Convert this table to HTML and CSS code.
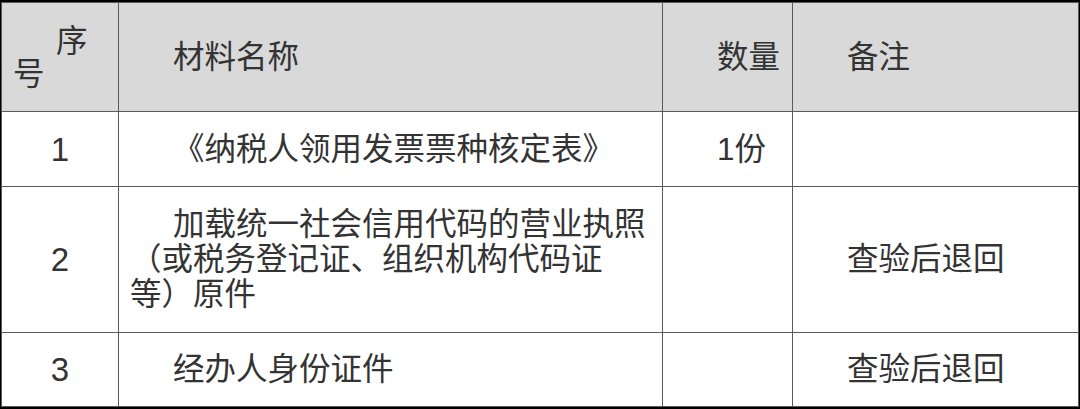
FILE: index.html
```html
<!DOCTYPE html>
<html lang="zh-CN">
<head>
<meta charset="utf-8">
<title>材料清单</title>
<link rel="stylesheet" href="styles.css">
</head>
<body>
<div class="frame">
<table class="materials">
  <colgroup>
    <col class="c-no">
    <col class="c-name">
    <col class="c-qty">
    <col class="c-note">
  </colgroup>
  <thead>
    <tr class="r-head">
      <th>序<br>号</th>
      <th>材料名称</th>
      <th>数量</th>
      <th>备注</th>
    </tr>
  </thead>
  <tbody>
    <tr class="r-1">
      <td class="num">1</td>
      <td>《纳税人领用发票票种核定表》</td>
      <td>1份</td>
      <td></td>
    </tr>
    <tr class="r-2">
      <td class="num">2</td>
      <td>加载统一社会信用代码的营业执照<br>（或税务登记证、组织机构代码证<br>等）原件</td>
      <td></td>
      <td>查验后退回</td>
    </tr>
    <tr class="r-3">
      <td class="num">3</td>
      <td>经办人身份证件</td>
      <td></td>
      <td>查验后退回</td>
    </tr>
  </tbody>
</table>
</div>
</body>
</html>
```
FILE: styles.css
```css
html, body {
  margin: 0;
  padding: 0;
  background: #000;
  height: 409px;
  overflow: hidden;
}
.frame {
  padding: 2px 2px 2px 1px;
}
.materials {
  width: 1077px;
  table-layout: fixed;
  border-collapse: collapse;
  background: #fff;
  font-family: "Liberation Sans", "Noto Sans CJK SC", sans-serif;
  font-size: 31.5px;
  line-height: 35px;
  color: #333;
}
.c-no { width: 117px; }
.c-name { width: 544px; }
.c-qty { width: 130px; }
.c-note { width: 286px; }
.materials th,
.materials td {
  border: 1px solid #5a5a5a;
  padding: 0 11px;
  text-indent: 43px;
  text-align: left;
  vertical-align: middle;
  font-weight: normal;
}
.materials thead th {
  background: #d9d9d9;
}
.materials th:first-child {
  line-height: 33px;
  padding-left: 11px;
  padding-top: 2px;
}
.materials td.num {
  text-align: center;
  text-indent: 0;
  font-size: 33px;
}
.r-head { height: 109px; }
.r-1 { height: 75px; }
.r-2 { height: 146px; }
.r-3 { height: 74px; }
```
